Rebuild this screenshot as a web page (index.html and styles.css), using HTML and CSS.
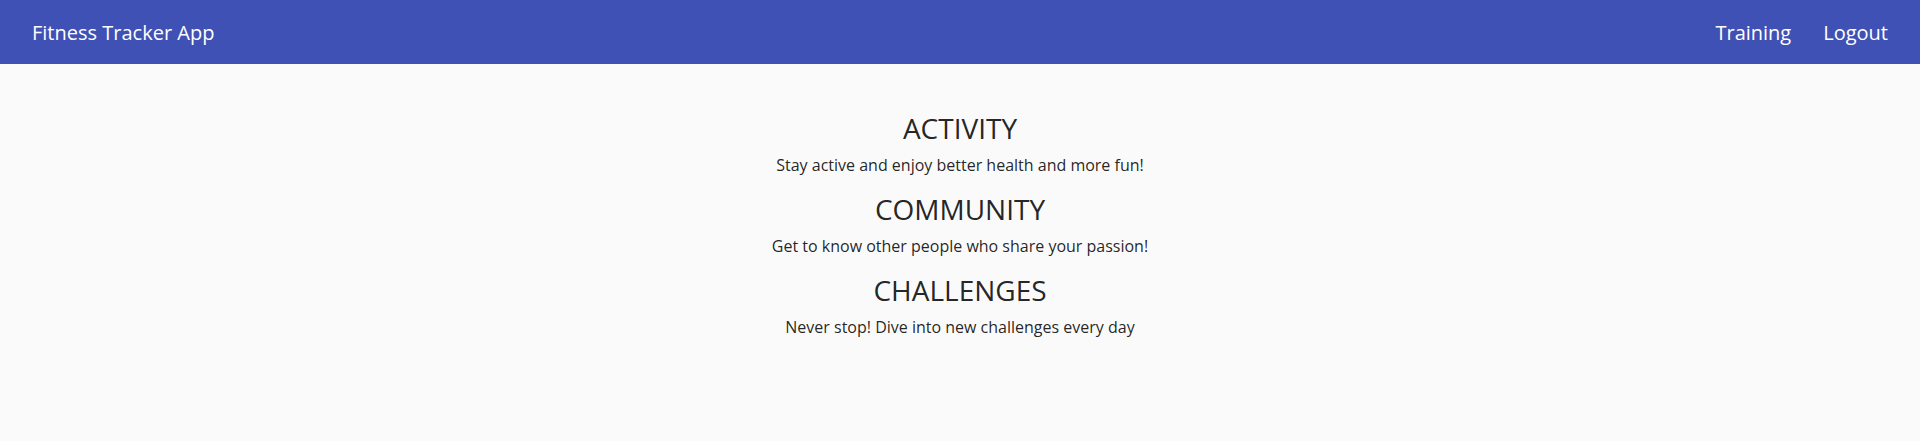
FILE: index.html
```html
<!DOCTYPE html>
<html lang="en">
<head>
<meta charset="utf-8">
<title>Fitness Tracker App</title>
<link rel="stylesheet" href="styles.css">
</head>
<body>
<header class="toolbar">
  <span class="brand">Fitness Tracker App</span>
  <nav class="nav">
    <a class="nav-link" href="#">Training</a>
    <a class="nav-link" href="#">Logout</a>
  </nav>
</header>
<main class="welcome">
  <section class="feature">
    <h2 class="feature-title">ACTIVITY</h2>
    <p class="feature-text">Stay active and enjoy better health and more fun!</p>
  </section>
  <section class="feature">
    <h2 class="feature-title">COMMUNITY</h2>
    <p class="feature-text">Get to know other people who share your passion!</p>
  </section>
  <section class="feature">
    <h2 class="feature-title">CHALLENGES</h2>
    <p class="feature-text">Never stop! Dive into new challenges every day</p>
  </section>
</main>
</body>
</html>
```
FILE: styles.css
```css
html, body {
  margin: 0;
  padding: 0;
  background: #fafafa;
  font-family: "Open Sans", "Liberation Sans", sans-serif;
  color: rgba(0, 0, 0, 0.87);
}

.toolbar {
  height: 64px;
  background: #3f51b5;
  color: #fff;
  display: flex;
  align-items: center;
  justify-content: space-between;
  padding: 0 32px;
}

.brand {
  font-size: 20px;
  font-weight: 400;
}

.nav {
  display: flex;
  gap: 32px;
}

.nav-link {
  color: #fff;
  text-decoration: none;
  font-size: 20px;
}

.welcome {
  padding-top: 46px;
  display: flex;
  flex-direction: column;
  align-items: center;
  text-align: center;
}

.feature {
  padding-bottom: 14px;
}

.feature-title {
  margin: 0 0 7px;
  font-size: 28px;
  line-height: 36px;
  font-weight: 400;
}

.feature-text {
  margin: 0;
  font-size: 16px;
  line-height: 24px;
}
```
